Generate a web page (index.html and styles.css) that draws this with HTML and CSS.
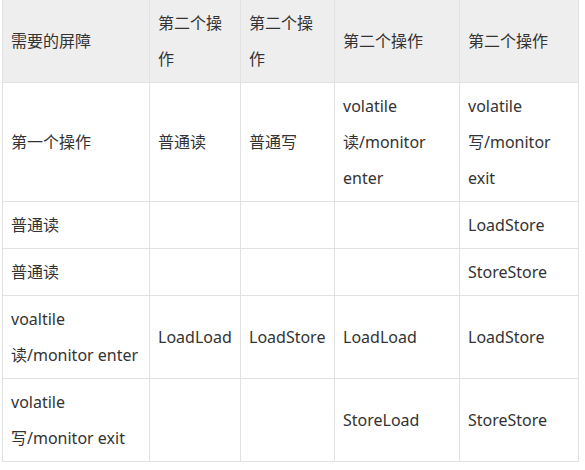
FILE: index.html
```html
<!DOCTYPE html>
<html lang="zh-CN">
<head>
<meta charset="utf-8">
<title>屏障表</title>
<link rel="stylesheet" href="styles.css">
</head>
<body>
<table class="barrier-table">
  <colgroup>
    <col class="c1"><col class="c2"><col class="c3"><col class="c4"><col class="c5">
  </colgroup>
  <thead>
    <tr>
      <th>需要的屏障</th>
      <th>第二个操作</th>
      <th>第二个操作</th>
      <th>第二个操作</th>
      <th>第二个操作</th>
    </tr>
  </thead>
  <tbody>
    <tr>
      <td>第一个操作</td>
      <td>普通读</td>
      <td>普通写</td>
      <td>volatile<br>读/monitor enter</td>
      <td>volatile<br>写/monitor exit</td>
    </tr>
    <tr>
      <td>普通读</td>
      <td></td>
      <td></td>
      <td></td>
      <td>LoadStore</td>
    </tr>
    <tr>
      <td>普通读</td>
      <td></td>
      <td></td>
      <td></td>
      <td>StoreStore</td>
    </tr>
    <tr>
      <td>voaltile<br>读/monitor enter</td>
      <td>LoadLoad</td>
      <td>LoadStore</td>
      <td>LoadLoad</td>
      <td>LoadStore</td>
    </tr>
    <tr>
      <td>volatile<br>写/monitor exit</td>
      <td></td>
      <td></td>
      <td>StoreLoad</td>
      <td>StoreStore</td>
    </tr>
  </tbody>
</table>
</body>
</html>
```

FILE: styles.css
```css
html, body {
  margin: 0;
  padding: 0;
  background: #ffffff;
}

body {
  font-family: "Noto Sans", "Noto Sans CJK SC", sans-serif;
  font-size: 16px;
  color: #333333;
}

.barrier-table {
  border-collapse: collapse;
  table-layout: fixed;
  width: 576px;
  margin: -1px 0 0 2px;
}

.c1 { width: 147px; }
.c2 { width: 91px; }
.c3 { width: 94px; }
.c4 { width: 125px; }
.c5 { width: 119px; }

.barrier-table th,
.barrier-table td {
  border: 1px solid #e2e2e2;
  padding: 5px 8px;
  line-height: 36px;
  text-align: left;
  vertical-align: middle;
  font-weight: normal;
  word-wrap: break-word;
}

.barrier-table thead th {
  background: #eeeeee;
}
```
